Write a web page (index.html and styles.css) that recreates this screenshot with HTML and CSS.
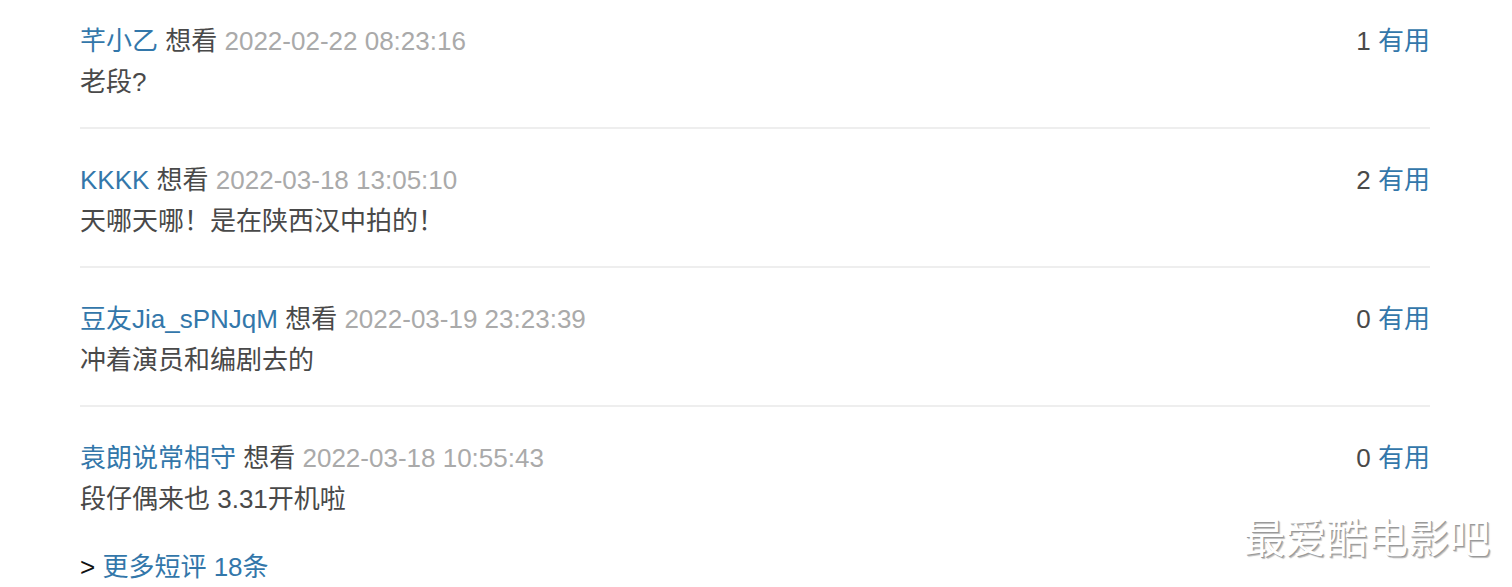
FILE: index.html
```html
<!DOCTYPE html>
<html lang="zh">
<head>
	<meta charset="utf-8">
	<meta name="viewport" content="width=device-width, initial-scale=1">
	<title>短评</title>
	<link rel="stylesheet" href="styles.css">
</head>
<body>
	<main class="comments">
		<div class="comment">
			<div class="comment-info">
				<span><a href="#">芊小乙</a> 想看 <span class="time">2022-02-22 08:23:16</span></span>
				<span class="votes">1 <a href="#">有用</a></span>
			</div>
			<p>老段?</p>
		</div>
		<div class="comment">
			<div class="comment-info">
				<span><a href="#">KKKK</a> 想看 <span class="time">2022-03-18 13:05:10</span></span>
				<span class="votes">2 <a href="#">有用</a></span>
			</div>
			<p>天哪天哪！是在陕西汉中拍的！</p>
		</div>
		<div class="comment">
			<div class="comment-info">
				<span><a href="#">豆友Jia_sPNJqM</a> 想看 <span class="time">2022-03-19 23:23:39</span></span>
				<span class="votes">0 <a href="#">有用</a></span>
			</div>
			<p>冲着演员和编剧去的</p>
		</div>
		<div class="comment last">
			<div class="comment-info">
				<span><a href="#">袁朗说常相守</a> 想看 <span class="time">2022-03-18 10:55:43</span></span>
				<span class="votes">0 <a href="#">有用</a></span>
			</div>
			<p>段仔偶来也 3.31开机啦</p>
		</div>
		<div class="more">&gt; <a href="#">更多短评 18条</a></div>
	</main>
	<div class="watermark">最爱酷电影吧</div>
</body>
</html>
```

FILE: styles.css
```css
body,
html {
	margin: 0;
	background: #fff;
	font-family: "Liberation Sans", "Noto Sans CJK SC", sans-serif;
	color: #494949;
	overflow: hidden;
}

a {
	color: #3377aa;
	text-decoration: none;
}

.comments {
	margin: 0 82px 0 80px;
	padding-top: 21px;
	font-size: 26px;
	line-height: 41px;
}

.comment {
	padding: 31px 0 24px;
	border-bottom: 2px solid #eee;
}

.comment:first-child {
	padding-top: 0;
}

.comment.last {
	border-bottom: none;
	padding-bottom: 27px;
}

.comment-info {
	display: flex;
	justify-content: space-between;
}

.time {
	color: #aaa;
}

.votes {
	color: #494949;
}

.comment p {
	margin: 0;
}

.more {
	color: #111;
}

.watermark {
	position: absolute;
	right: 22px;
	top: 517px;
	font-size: 41px;
	line-height: 44px;
	color: #fff;
	text-shadow: 1px 1px 0 #999, 2px 2px 1px #bbb;
}
```
